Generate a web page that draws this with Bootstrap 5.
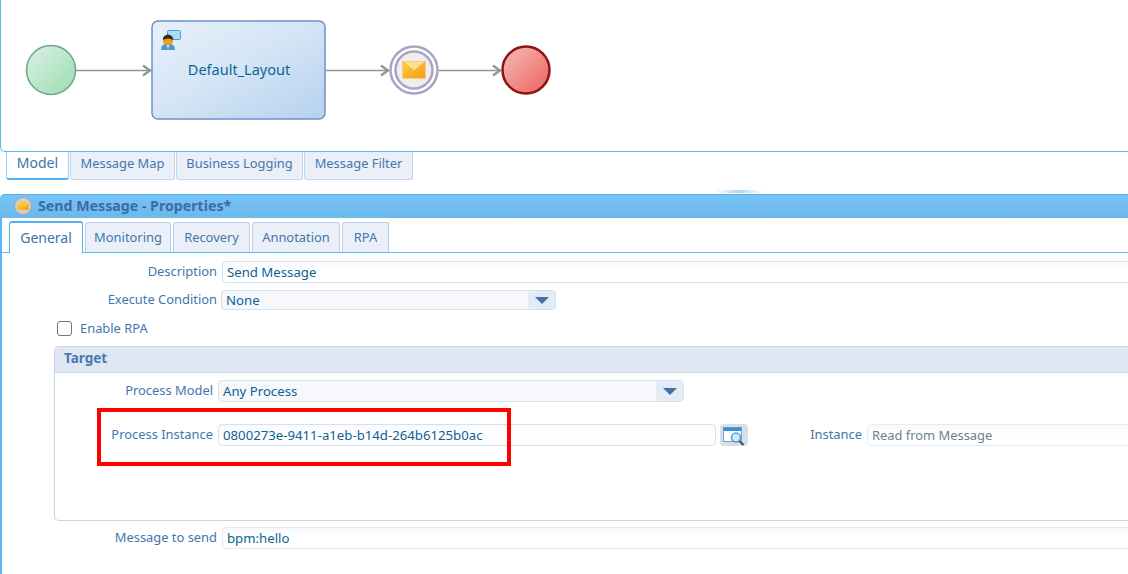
<!DOCTYPE html>
<html lang="en">
<head>
<meta charset="utf-8">
<title>Send Message - Properties</title>
<link href="https://cdn.jsdelivr.net/npm/bootstrap@5.3.0/dist/css/bootstrap.min.css" rel="stylesheet">
<style>
html,body{height:574px;overflow:hidden;background:#fff}
body{font-family:"Noto Sans","Open Sans",sans-serif;font-size:12.9px;line-height:18px;color:#0f5f92}
.sheet{width:1150px;height:574px;position:relative}
.canvas-pane{height:152px;border:1px solid #5bb9ec;border-top:0;border-right:0;border-bottom-left-radius:5px}
.canvas-pane svg{display:block}
.diagram-label{font-family:"Noto Sans",sans-serif;font-size:14.500px;fill:#0f6496}
.lower-tabs{height:28px;padding-left:6px;gap:1px;margin-bottom:10px}
.tab-item{display:flex;align-items:center;justify-content:center;color:#4277ad;background:#ebf0f8;border:1px solid #c5d5ea;border-top:0;border-radius:0 0 3px 3px;padding-bottom:5px}
.tab-on{background:#fff;border-color:#9fd0ef;border-bottom:2px solid #4db6f2;color:#3f72a8;font-size:14px}
.w-a{width:63px}.w-b{width:105px}.w-c{width:127px}.w-d{width:109px}
.grip{height:3px;width:48px;margin:0 0 1px 715px;background:linear-gradient(90deg,#fff,#b9d2f1,#fff)}
.props{height:380px;border-left:2px solid #54b8f2;border-top-left-radius:5px}
.props-head{height:24px;margin-left:-2px;padding:0 0 1px 14px;gap:6px;background:linear-gradient(#77c3f6,#6bb8eb);border-top:1px solid #4db6f2;border-top-left-radius:5px;font-weight:700;font-size:14.200px;color:#3c6ba6}
.upper-tabs{height:35px;padding-left:7px;gap:2px;align-items:flex-end;border-bottom:1px solid #54b8f2}
.upper-tabs .tab-item{height:30px;border:1px solid #b9cde6;border-bottom:0;border-radius:3px 3px 0 0;padding:0 0 1px}
.upper-tabs .tab-on{height:32px;width:74px;background:#fff;border:1px solid #4db6f2;border-top-width:2px;border-bottom:0;margin-bottom:-1px;position:relative}
.w-e{width:86px}.w-f{width:77px}.w-g{width:88px}.w-h{width:47px}
.form-line{display:flex;align-items:center;height:22px}
.line-cond{height:20px;margin-top:7px}
.line-inst{margin-top:22px}
.line-send{margin-top:6px}
.lbl{color:#4277ad;text-align:right;margin-bottom:3px;white-space:nowrap}
.lbl-top{width:215px;margin-right:5px}
.field{height:22px;border:1px solid #d5e1ef;border-radius:4px;padding:0 4px;background:linear-gradient(#f8fafd,#fff 50%);color:#0f5f92;display:flex;align-items:center;white-space:nowrap;font-size:13.200px}
.field-drop{background:#f6f8fc;justify-content:space-between;padding-right:0}
.cond-field{width:335px;height:20px}
.cond-field .drop-btn{height:18px}
.model-field{width:466px}
.inst-field{width:498px}
.ro-field{border-color:#e6ecf4;color:#6d7f8e;font-size:12.900px}
.send-field{border-color:#e3e9f2}
.drop-btn{width:27px;height:20px;background:#e3ebf5;border-radius:4px;display:flex;align-items:center;justify-content:center}
.drop-btn i{display:block;width:0;height:0;border-left:7px solid transparent;border-right:7px solid transparent;border-top:7px solid #3d74ad}
.tick{width:15px;height:15px;border:1px solid #777;border-radius:3px;background:#fff;margin:0 8px 0 0}
.rpa-line{margin:11px 0 0 55px;height:15px;color:#4277ad;padding-bottom:1px}
.tick{margin-bottom:-1px}
.group{margin:10px 0 0 52px;height:175px;border:1px solid #c5d6ec;border-right:0;border-radius:5px}
.group-head{height:26px;padding:0 0 4px 9px;background:#e0e7f2;border-bottom:1px solid #c9d7ea;border-radius:4px 0 0 0;font-weight:700;color:#4a78b2;font-size:13.500px}
.group-body{padding-top:7px}
.lbl-in{width:158px;margin-right:5px}
.lbl-inst{width:114px;margin-right:5px}
.find-btn{width:28px;height:22px;margin-left:4px;border-radius:4px;background:#d9dfe7;display:flex;align-items:center;justify-content:center}
.ringed{position:absolute;left:97px;top:408px;width:414px;height:58px;border:4px solid #f00;pointer-events:none}
</style>
</head>
<body>
<div class="sheet">
  <div class="canvas-pane">
    <svg width="1127" height="151" viewBox="1 0 1127 151" role="img" aria-label="Process diagram">
      <defs>
        <linearGradient id="gs" x1="0" y1="0" x2="1" y2="1"><stop offset="0" stop-color="#dcf1e6"/><stop offset="1" stop-color="#9cdcb2"/></linearGradient>
        <linearGradient id="gt" x1="0" y1="0" x2="1" y2="1"><stop offset="0" stop-color="#e6f0fa"/><stop offset=".45" stop-color="#d6e6f6"/><stop offset="1" stop-color="#b6d1ee"/></linearGradient>
        <linearGradient id="ge" x1="0" y1="0" x2="1" y2="1"><stop offset="0" stop-color="#f8bcb8"/><stop offset="1" stop-color="#ea625d"/></linearGradient>
        <linearGradient id="gm" x1="0" y1="0" x2="1" y2="1"><stop offset="0" stop-color="#ffd23a"/><stop offset="1" stop-color="#fb9a12"/></linearGradient>
      </defs>
      <g fill="none" stroke="#8b9a90" stroke-width="1.500">
        <path d="M76 70.500H151M326 70.500H389M439 70.500H500"/>
        <path d="M143 65.500l7 5-7 5M381 65.500l7 5-7 5M493 65.500l7 5-7 5" stroke-width="2.200"/>
      </g>
      <circle cx="51" cy="70" r="24.500" fill="url(#gs)" stroke="#6fa58a" stroke-width="1.500"/>
      <rect x="152" y="21" width="173" height="98" rx="6" fill="url(#gt)" stroke="#6e90c8" stroke-width="1.500"/>
      <rect x="167.500" y="30.500" width="13" height="9" rx="1" fill="#a9dcf7" stroke="#4a9fd8"/>
      <path d="M161 50c0-5 3-6.500 7-6.500s7 1.500 7 6.500z" fill="#4f9ccc"/>
      <circle cx="168" cy="40.500" r="5" fill="#f09a1c"/>
      <path d="M162.800 40a5.200 5.500 0 0 1 10.400 0q-5.200-3-10.400 0z" fill="#3a2a1c"/>
      <path d="M167 45h2l-1 4z" fill="#fff"/>
      <text class="diagram-label" x="239" y="75" text-anchor="middle">Default_Layout</text>
      <circle cx="414" cy="70" r="23.500" fill="#fff" stroke="#a8a4c4" stroke-width="2.500"/>
      <circle cx="414" cy="70" r="18.500" fill="#eeeeee" stroke="#a8a4c4" stroke-width="2.500"/>
      <rect x="402.500" y="61.500" width="23" height="17" fill="url(#gm)" stroke="#f8c98a"/>
      <path d="M403 62l11 9 11-9" fill="#ffe08a" stroke="#f2a93b"/>
      <path d="M403 78l8-9M425 78l-8-9" fill="none" stroke="#f2a93b"/>
      <circle cx="526" cy="70" r="23.500" fill="url(#ge)" stroke="#8f1414" stroke-width="2.500"/>
    </svg>
  </div>
  <div class="lower-tabs d-flex">
    <div class="tab-item tab-on w-a">Model</div>
    <div class="tab-item w-b">Message Map</div>
    <div class="tab-item w-c">Business Logging</div>
    <div class="tab-item w-d">Message Filter</div>
  </div>
  <div class="grip"></div>
  <div class="props">
    <div class="props-head d-flex align-items-center">
      <svg width="18" height="18" viewBox="0 0 18 18" aria-hidden="true"><circle cx="9" cy="9" r="8.500" fill="#cfcfcf" stroke="#a6a6a6"/><rect x="3.500" y="5" width="11" height="8" rx="1" fill="url(#gm)"/><path d="M3.500 5.500l5.500 4 5.500-4" fill="none" stroke="#f7d48a"/></svg>
      <span>Send Message - Properties*</span>
    </div>
    <div class="upper-tabs d-flex">
      <div class="tab-item tab-on">General</div>
      <div class="tab-item w-e">Monitoring</div>
      <div class="tab-item w-f">Recovery</div>
      <div class="tab-item w-g">Annotation</div>
      <div class="tab-item w-h">RPA</div>
    </div>
    <div class="form-line mt-2">
      <div class="lbl lbl-top">Description</div>
      <div class="field flex-grow-1">Send Message</div>
    </div>
    <div class="form-line line-cond">
      <div class="lbl lbl-top me-1">Execute Condition</div>
      <div class="field field-drop cond-field">None<span class="drop-btn"><i></i></span></div>
    </div>
    <div class="rpa-line d-flex align-items-center"><span class="tick"></span>Enable RPA</div>
    <div class="group">
      <div class="group-head d-flex align-items-center">Target</div>
      <div class="group-body">
        <div class="form-line">
          <div class="lbl lbl-in">Process Model</div>
          <div class="field field-drop model-field">Any Process<span class="drop-btn"><i></i></span></div>
        </div>
        <div class="form-line line-inst">
          <div class="lbl lbl-in">Process Instance</div>
          <div class="field inst-field">0800273e-9411-a1eb-b14d-264b6125b0ac</div>
          <div class="find-btn">
            <svg width="24" height="21" viewBox="0 0 24 21" aria-hidden="true"><rect x="1.500" y="2.500" width="18" height="14" fill="#fff" stroke="#7fa0c8"/><rect x="1.500" y="2.500" width="18" height="3.500" fill="#3b8bd6"/><circle cx="14" cy="12.500" r="4.500" fill="#d2e9f9" stroke="#4e9fd8" stroke-width="1.500"/><path d="M17.500 16l4 4" stroke="#444" stroke-width="2"/></svg>
          </div>
          <div class="lbl lbl-inst">Instance</div>
          <div class="field flex-grow-1 ro-field">Read from Message</div>
        </div>
      </div>
    </div>
    <div class="form-line line-send">
      <div class="lbl lbl-top">Message to send</div>
      <div class="field flex-grow-1 send-field">bpm:hello</div>
    </div>
  </div>
  <div class="ringed"></div>
</div>
<script src="https://cdn.jsdelivr.net/npm/bootstrap@5.3.0/dist/js/bootstrap.bundle.min.js"></script>
</body>
</html>
